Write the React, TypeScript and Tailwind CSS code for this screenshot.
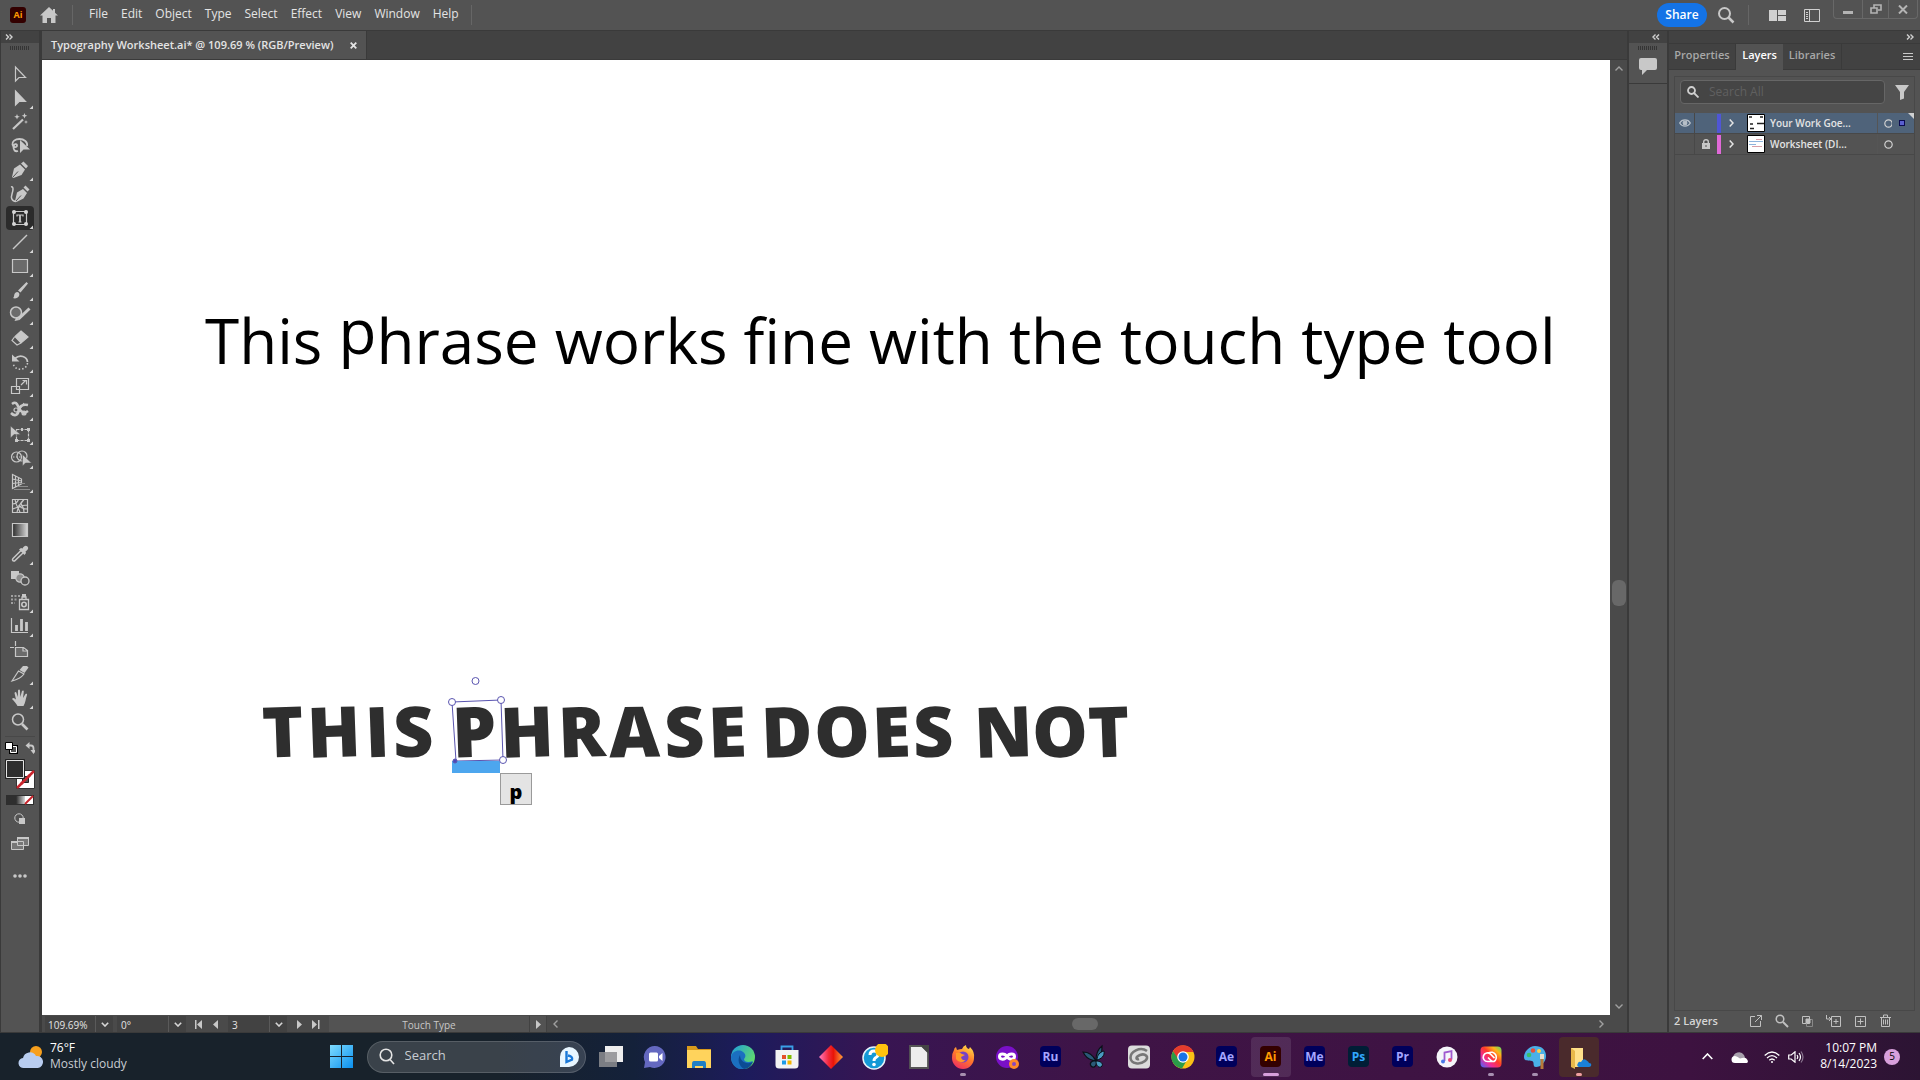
import React from 'react';

const menuItems = ['File', 'Edit', 'Object', 'Type', 'Select', 'Effect', 'View', 'Window', 'Help'];

// every tool is drawn on a 28x24 grid
const tools: { name: string; more?: boolean; active?: boolean; icon: React.ReactNode }[] = [
    { name: 'Selection Tool', icon: <path d="M9.500 5v14l3.500-3.500h6.500z" /> },
    { name: 'Direct Selection Tool', more: true, icon: <path fill="#c8c8c8" d="M9.500 5v14l3.500-3.500h6.500z" /> },
    {
        name: 'Magic Wand Tool',
        icon: (
            <>
                <path strokeWidth="2.200" d="M7 19 17 9.500" />
                <path fill="#c8c8c8" stroke="none" d="m11 4 .8 2 2 .8-2 .8-.8 2-.8-2-2-.8 2-.8zM18.500 3l.8 2 2 .8-2 .8-.8 2-.8-2-2-.8 2-.8zM20 10l.5 1.500 1.500.5-1.500.5-.5 1.500-.5-1.500-1.500-.5 1.500-.5z" />
            </>
        ),
    },
    {
        name: 'Lasso Tool',
        icon: (
            <>
                <path strokeWidth="1.800" d="M21 12c1-4-3-7-7.500-7S6 7.500 6.500 10.500 11 14 11 11.500 7.500 10 7.500 13s1.500 5 4.500 4" />
                <path fill="#c8c8c8" stroke="none" d="M14 6v13l3.500-3.500H24z" />
            </>
        ),
    },
    {
        name: 'Pen Tool',
        more: true,
        icon: (
            <>
                <path fill="#c8c8c8" stroke="none" d="m6 19 2-8.500 6-4 5 5-3.500 5.500L7.500 20zM15 5.500l2.500-2 4.500 4.500-2 2.500z" />
                <path stroke="#535353" strokeWidth="1" d="m7 19 5-5.500" />
            </>
        ),
    },
    {
        name: 'Curvature Tool',
        icon: (
            <>
                <path fill="#c8c8c8" stroke="none" d="m9 19 2-8.500 6-3.500 4 4-3.500 5.500L10.500 20zM17.500 5.500l2-2 4 4-2 2z" />
                <path strokeWidth="1.500" d="M5 5c3-1 2 4 1 7s-1 7 4 7.500" />
                <path stroke="#535353" strokeWidth="1" d="m10 19 5-5.500" />
            </>
        ),
    },
    {
        name: 'Touch Type Tool',
        more: true,
        active: true,
        icon: (
            <>
                <path d="M7.500 5.500h13v13h-13zM11 10.500v-1.500h6v1.500M12.500 16h3" />
                <path strokeWidth="1.800" d="M14 9v7" />
                <g fill="#d6d6d6" stroke="none">
                    <circle cx="8" cy="6" r="2" />
                    <circle cx="20" cy="6" r="2" />
                    <circle cx="8" cy="18" r="2" />
                    <circle cx="20" cy="18" r="2" />
                </g>
            </>
        ),
    },
    { name: 'Line Segment Tool', more: true, icon: <path strokeWidth="1.500" d="M7 19 21 5" /> },
    { name: 'Rectangle Tool', more: true, icon: <path fill="#6b6b6b" d="M6.500 5.500h15v13h-15z" /> },
    {
        name: 'Paintbrush Tool',
        more: true,
        icon: <path fill="#c8c8c8" stroke="none" d="M7 20c2-1 0-5 4-6 2 0 3 2 2 4-1 2-4 3-6 2zM12 12.500 20.500 4l1.500 1.500-7.500 9z" />,
    },
    {
        name: 'Shaper Tool',
        more: true,
        icon: (
            <>
                <circle cx="10" cy="10.500" r="5.500" fill="#6b6b6b" strokeWidth="1.500" />
                <path strokeWidth="3" d="m12.500 17 11-10.500" />
                <path fill="#c8c8c8" stroke="none" d="m8.500 19 2-4 3 3z" />
            </>
        ),
    },
    {
        name: 'Eraser Tool',
        more: true,
        icon: (
            <>
                <path fill="#c8c8c8" d="m15 5 7 6-7 6-6-6.500z" />
                <path d="M8.500 11 6 14.500l5 4.500 4-2" />
            </>
        ),
    },
    {
        name: 'Rotate Tool',
        more: true,
        icon: (
            <>
                <path strokeWidth="1.800" d="M9 8.500c5-4.500 12-2 12.500 3.500" />
                <path strokeWidth="1.600" strokeDasharray="1.500 2" d="M21.500 13c-1 8-13 8.500-14.500 0" />
                <path fill="#c8c8c8" stroke="none" d="M6 4.500v7h7.500z" />
            </>
        ),
    },
    {
        name: 'Scale Tool',
        more: true,
        icon: <path d="M5.500 12.500h8v7h-8zM10.500 15.500v-11h12v11zM15 11l4.500-4.500M16.500 6.500h4v4" />,
    },
    {
        name: 'Width Tool',
        more: true,
        icon: (
            <>
                <path strokeWidth="2.600" d="M6 6c4-3 5 0 7 4s5 6 9 3M5 15c4 4 7 2 8-3s4-6 9-5" />
                <path d="m9 18 9-13" />
                <circle cx="10" cy="12" r="2" fill="#535353" />
                <circle cx="18" cy="15" r="2" fill="#c8c8c8" />
            </>
        ),
    },
    {
        name: 'Free Transform Tool',
        more: true,
        icon: (
            <>
                <path strokeDasharray="3 1" d="M10.500 7.500h12v11h-12z" />
                <path fill="#c8c8c8" stroke="#535353" strokeWidth=".5" d="M4.500 4v12l3.500-3.500h6.500z" />
                <path fill="#c8c8c8" stroke="none" d="M21 6h3v3h-3zM21 17h3v3h-3zM9 17h3v3H9zM15 6h2v3h-2z" />
            </>
        ),
    },
    {
        name: 'Shape Builder Tool',
        more: true,
        icon: (
            <>
                <circle cx="10.500" cy="11" r="5" />
                <circle cx="16" cy="10" r="5" />
                <path strokeDasharray="1.500 1.500" d="M7 11h9" />
                <path fill="#c8c8c8" stroke="#535353" strokeWidth=".5" d="M16.500 8.500V20l3-3h6z" />
            </>
        ),
    },
    {
        name: 'Perspective Grid Tool',
        more: true,
        icon: (
            <>
                <path d="M6.500 4.500v14l9-4.500V9zM9.500 6v11M12.500 7.500v8M6.500 9l9 2M6.500 13.500l9-1" />
                <path stroke="#8c8c8c" d="M15 13.500h4M12 16.500h10M8 19.500h16" />
            </>
        ),
    },
    {
        name: 'Mesh Tool',
        icon: (
            <path d="M6.500 5.500h15v13h-15zM6.500 10c4 0 5-2 6-4.500M11 18.500c1-6 3-9 7-13M6.500 15c5-1 8-4 15-4M14 18.500c-1-4-4-6-5-13M21.500 15c-4 0-7-1-9-4M18 18.500c0-4-1-6-3-9" />
        ),
    },
    {
        name: 'Gradient Tool',
        icon: (
            <>
                <defs>
                    <linearGradient id="tool-grad">
                        <stop offset="0" stopColor="#2b2b2b" />
                        <stop offset="1" stopColor="#d6d6d6" />
                    </linearGradient>
                </defs>
                <path fill="url(#tool-grad)" d="M6.500 5.500h15v13h-15z" />
            </>
        ),
    },
    {
        name: 'Eyedropper Tool',
        more: true,
        icon: (
            <>
                <path d="m15 8.500-8 8c-1 1-.5 3 1.500 2.500l8.500-8" strokeWidth="1.500" />
                <path fill="#c8c8c8" stroke="none" d="M13 7.500 15 6l1.500.5C18 3.500 20 3 21.500 4.500S22 8 19.500 9.500l.5 1.500-1.500 2z" />
            </>
        ),
    },
    {
        name: 'Blend Tool',
        icon: (
            <>
                <path fill="#c8c8c8" stroke="none" d="M5 5h8v8H5z" />
                <circle cx="14" cy="12" r="4.200" fill="#8c8c8c" />
                <circle cx="19" cy="15" r="4" fill="#535353" strokeWidth="1.300" />
            </>
        ),
    },
    {
        name: 'Symbol Sprayer Tool',
        more: true,
        icon: (
            <>
                <path d="M13.500 9.500h9v10h-9zM16 9V7h4v2" strokeWidth="1.300" />
                <path fill="#c8c8c8" stroke="none" d="M16 4h4v3h-4z" />
                <circle cx="18" cy="14.500" r="2.200" strokeWidth="1.600" />
                <path stroke="#a0a0a0" strokeWidth="2" strokeDasharray="2 1.500" d="M5 6h9M5 9.500h6M5 13h4" />
            </>
        ),
    },
    {
        name: 'Column Graph Tool',
        more: true,
        icon: (
            <>
                <path d="M5.500 4v14.500H22" />
                <path strokeWidth="2.800" d="M10.500 11v6M15.500 5v12M20.500 8v9" />
            </>
        ),
    },
    {
        name: 'Artboard Tool',
        icon: <path fill="#6b6b6b" d="M9.500 9.500h8l4 3v6h-12zM17 10v3h4M4 9.500h4M9.500 3v5" />,
    },
    {
        name: 'Slice Tool',
        more: true,
        icon: (
            <>
                <path d="m6 19 6.500-10L18 12c-3 4-6 5-12 7z" />
                <path fill="#c8c8c8" stroke="none" d="m13.500 8 3.500-4h4l1.500 1.500L18.500 11z" />
            </>
        ),
    },
    {
        name: 'Hand Tool',
        more: true,
        icon: (
            <path
                fill="#c8c8c8"
                stroke="none"
                d="M11.500 20C10 17 8 15 6 13c1-1.500 2.500-1 4 .5L8.500 7c.5-1.300 1.700-1.200 2 0l1.300 4L12 4.500c.5-1.200 1.700-1.200 2 0l.3 6.500 1.700-6c.7-1 1.900-.6 1.800.5L17 12l2.500-4c1-.7 1.900 0 1.500 1-1.500 4-1.500 8-3.500 11z"
            />
        ),
    },
    {
        name: 'Zoom Tool',
        icon: (
            <>
                <circle cx="12" cy="9.500" r="5.500" strokeWidth="1.500" />
                <path strokeWidth="2.600" d="m16 14 5.500 5.500" />
            </>
        ),
    },
];

const Tool = ({ name, more, active, icon }: (typeof tools)[number]) => (
    <button type="button" title={name} aria-label={name} className={`h-6 w-7 rounded-sm ${active ? 'bg-[#2b2b2b]' : ''}`}>
        <svg width="28" height="24" viewBox="0 0 28 24" fill="none" stroke="#c8c8c8" strokeWidth="1.200">
            {icon}
            {more && <path fill="#d6d6d6" stroke="none" d="M27 19.500v3.500h-3.500z" />}
        </svg>
    </button>
);

const Grip = () => (
    <svg width="20" height="4" viewBox="0 0 20 4" className="mx-auto">
        <path stroke="#353535" strokeWidth="4" strokeDasharray="1 1" d="M0 2h20" />
    </svg>
);

const Chevrons = ({ flip }: { flip?: boolean }) => (
    <svg width="8" height="6" viewBox="0 0 8 6" fill="none" stroke="#d0d0d0" strokeWidth="1.400">
        {flip ? <path d="M3.500.5 1 3l2.500 2.500M7 .5 4.500 3 7 5.500" /> : <path d="M1 .5 3.500 3 1 5.500M4.500.5 7 3 4.500 5.500" />}
    </svg>
);

const Down = () => (
    <svg width="8" height="5" viewBox="0 0 8 5" fill="none" stroke="#d6d6d6" strokeWidth="1.600">
        <path d="m.8.8 3.200 3.200L7.200.8" />
    </svg>
);

const words = [
    { text: 'THIS', place: 'left-[220px] gap-1' },
    { text: 'PHRASE', place: 'left-[410px] gap-1' },
    { text: 'DOES', place: 'left-[719px] gap-0.5' },
    { text: 'NOT', place: 'left-[932px]' },
];
const tilt = ['-rotate-2', '-rotate-2', '-rotate-2', '-rotate-1'];

const Canvas = () => (
    <main className="relative min-w-0 flex-1 overflow-hidden bg-white">
        <p className="absolute left-[163px] top-[235px] whitespace-nowrap text-[62px] leading-[90px] text-black">
            This <span className="relative -top-[10px]">p</span>hrase works fine with the touch type tool
        </p>
        {words.map((w) => (
            <p key={w.text} className={`absolute top-[625px] flex text-[70px] font-extrabold leading-[90px] text-[#2e2e2e] ${w.place}`}>
                {w.text.split('').map((c, i) => (
                    <span key={i} className={tilt[i % 4]}>
                        {c}
                    </span>
                ))}
            </p>
        ))}
        <svg className="absolute left-[400px] top-[610px]" width="70" height="110" viewBox="0 0 70 110" fill="none" stroke="#5a55b0">
            <path d="m10 32 49-2 2 60-47 1z" />
            <path fill="#4da6ee" stroke="none" d="M10 91h48v12H10z" />
            <g fill="#fff">
                <circle cx="33.500" cy="11" r="3.500" />
                <circle cx="10" cy="32" r="3.500" />
                <circle cx="59" cy="30" r="3.500" />
                <circle cx="61" cy="90" r="3.500" />
            </g>
            <circle cx="13" cy="91" r="2" fill="#4a48b8" />
        </svg>
        <div className="absolute left-[458px] top-[713px] flex h-8 w-8 items-end justify-center border border-[#9a9a9a] bg-[#e4e4e4] text-xl font-extrabold leading-6 text-black">
            p
        </div>
    </main>
);

const StatusBar = () => (
    <footer className="flex h-[17px] items-end overflow-hidden bg-[#4a4a4a] pl-[3px] pr-[17px] text-[10px] text-[#e4e4e4]">
        <div className="flex h-4 w-[50px] items-center bg-[#424242] pl-[3px] pt-0.5">109.69%</div>
        <button type="button" aria-label="Zoom level" className="flex h-4 w-[18px] items-center justify-center border-l border-[#5a5a5a] bg-[#424242]"><Down /></button>
        <div className="ml-1 flex h-4 w-[51px] items-center bg-[#424242] pl-1 pt-0.5">0°</div>
        <button type="button" aria-label="Rotate view" className="flex h-4 w-[18px] items-center justify-center border-l border-[#5a5a5a] bg-[#424242]"><Down /></button>
        <div className="flex h-4 w-[42px] items-center justify-center">
            <svg width="26" height="9" viewBox="0 0 26 9" fill="#c8c8c8"><path d="M1 0h1.500v9H1zM8 0v9L3 4.500zM24 0v9l-5-4.500z" /></svg>
        </div>
        <div className="flex h-4 w-[41px] items-center bg-[#424242] pl-1 pt-0.5">3</div>
        <button type="button" aria-label="Artboard" className="flex h-4 w-[18px] items-center justify-center border-l border-[#5a5a5a] bg-[#424242]"><Down /></button>
        <div className="flex h-4 w-[42px] items-center justify-center">
            <svg width="26" height="9" viewBox="0 0 26 9" fill="#c8c8c8"><path d="M2 0v9l5-4.500zM17 0v9l5-4.500zM23 0h1.500v9H23z" /></svg>
        </div>
        <div className="flex h-4 w-[200px] items-center justify-center bg-[#535353] pt-0.5 text-[#c8c8c8]">Touch Type</div>
        <div className="flex h-4 w-[18px] items-center justify-center border-x border-[#424242] bg-[#535353]">
            <svg width="5" height="9" viewBox="0 0 5 9" fill="#c8c8c8"><path d="M0 0v9l5-4.500z" /></svg>
        </div>
        <div className="flex h-4 flex-1 items-center justify-between px-1.5">
            <svg width="5" height="8" viewBox="0 0 5 8" fill="none" stroke="#a0a0a0" strokeWidth="1.400"><path d="M4.500.5 1 4l3.500 3.500" /></svg>
            <span className="ml-3 h-3 w-[26px] rounded-full bg-[#686868]" />
            <svg width="5" height="8" viewBox="0 0 5 8" fill="none" stroke="#a0a0a0" strokeWidth="1.400"><path d="M.5.5 4 4 .5 7.500" /></svg>
        </div>
    </footer>
);

const ScrollV = () => (
    <div className="flex w-[17px] flex-col items-center justify-between bg-[#4a4a4a] pb-1.5 pt-1.5">
        <svg width="8" height="5" viewBox="0 0 8 5" fill="none" stroke="#a0a0a0" strokeWidth="1.400"><path d="M.5 4.500 4 1l3.500 3.500" /></svg>
        <span className="mt-[110px] h-[26px] w-3.5 rounded-md bg-[#686868]" />
        <svg width="8" height="5" viewBox="0 0 8 5" fill="none" stroke="#a0a0a0" strokeWidth="1.400"><path d="M.5.5 4 4 7.500.5" /></svg>
    </div>
);

const TopBar = () => (
    <header className="flex h-[30px] items-center bg-[#535353] text-xs text-[#e4e4e4]">
        <span className="ml-2.5 flex h-4 w-4 items-center justify-center rounded-[3px] bg-[#330000] text-[9px] font-bold text-[#ff9a00]">Ai</span>
        <svg className="ml-3.5" width="18" height="16" viewBox="0 0 18 16" fill="#c8c8c8"><path d="M9 0 0 8.500h2.500V16H7v-5h4v5h4.500V8.500H18L15 5.700V2h-2v1.800z" /></svg>
        <span className="ml-3.5 h-5 w-px bg-[#666]" />
        <nav className="ml-4 flex gap-[13px] pb-0.5">
            {menuItems.map((m) => (
                <button key={m} type="button">{m}</button>
            ))}
        </nav>
        <span className="ml-3 h-5 w-px bg-[#666]" />
        <div className="ml-auto flex h-full items-center">
            <button type="button" className="h-6 w-[50px] rounded-full bg-[#1473e6] font-semibold text-white">Share</button>
            <svg className="ml-2.5" width="18" height="18" viewBox="0 0 18 18" fill="none" stroke="#c8c8c8" strokeWidth="2"><circle cx="7.500" cy="7.500" r="5.500" /><path strokeWidth="2.500" d="m11.500 11.500 5 5" /></svg>
            <span className="ml-[13px] h-5 w-px bg-[#666]" />
            <svg className="ml-5" width="17" height="11" viewBox="0 0 17 11" fill="#d0d0d0"><path d="M0 0h8v11H0zM9 0h8v5H9zM9 6h8v5H9z" /></svg>
            <svg className="ml-[18px]" width="16" height="13" viewBox="0 0 16 13" fill="none" stroke="#d0d0d0"><path d="M.5.500h15v12H.5zM5.500.5v12" /><path strokeDasharray="1 1" strokeWidth="2" d="M3 3v7" /></svg>
            <div className="ml-[13px] mr-0.5 flex h-[19px] self-start rounded-b-sm border border-t-0 border-[#686868]">
                <button type="button" aria-label="Minimize" className="flex w-7 items-center justify-center"><svg width="10" height="3" fill="#b4b4b4" className="mt-1.5"><path d="M0 0h10v3H0z" /></svg></button>
                <button type="button" aria-label="Restore" className="flex w-[27px] items-center justify-center border-x border-[#686868]"><svg width="12" height="10" viewBox="0 0 12 10" fill="none" stroke="#b4b4b4" strokeWidth="1.600"><path d="M4 4V1h7v5H8M1 4h6v5H1z" /></svg></button>
                <button type="button" aria-label="Close" className="flex w-7 items-center justify-center"><svg width="10" height="9" viewBox="0 0 10 9" stroke="#b4b4b4" strokeWidth="2"><path d="m1 .5 8 8M9 .5l-8 8" /></svg></button>
            </div>
        </div>
    </header>
);

const Toolbar = () => (
    <aside className="flex w-10 flex-col border-l border-r border-[#3a3a3a] bg-[#535353]">
        <div className="flex h-3 items-center bg-[#424242] pl-1"><Chevrons /></div>
        <div className="py-[3px]"><Grip /></div>
        <div className="mt-[9px] flex flex-col items-center">
            {tools.map((t) => (
                <Tool key={t.name} {...t} />
            ))}
        </div>
        <div className="mx-1 mt-0.5 border-t border-[#484848]" />
        <svg className="mt-[5px] self-center" width="30" height="65" viewBox="5 742 30 65" fill="none">
            <path stroke="#000" strokeWidth="2" d="M10 746h7v7h-7z" />
            <path stroke="#fff" d="M10.500 746.500h6v6h-6z" />
            <path fill="#fff" stroke="#000" d="M5.500 742.500h7v7h-7z" />
            <path stroke="#c8c8c8" strokeWidth="1.800" d="M28 745.500h3q2.500 0 2.500 3v3" />
            <path fill="#c8c8c8" d="m25.500 745.500 4-3.500v7zM30.500 750h6l-3 4z" />
            <path fill="#fff" stroke="#333" d="M16.500 770.500h18v18h-18z" />
            <path stroke="#c9252d" strokeWidth="2.500" d="m17 788 17-17" />
            <path fill="#535353" stroke="#222" d="M22.500 776.500h6v6h-6z" />
            <path stroke="#c9252d" strokeWidth="2.500" d="m21 784 9-9" />
            <path fill="#2e2e2e" stroke="#222" d="M5.500 759.500h19v19h-19z" />
            <path stroke="#e4e4e4" d="M6.500 760.500h17v17h-17z" />
            <path fill="#2e2e2e" d="M6 795h28v10H6z" />
            <path fill="url(#tool-grad)" d="M16 796h9v8h-9z" />
            <path fill="#fff" d="M25 796h8v8h-8z" />
            <path stroke="#c9252d" strokeWidth="2" d="m25 804 8-8" />
        </svg>
        <svg className="mt-[5px] self-center" width="28" height="70" viewBox="6 812 28 70" fill="none" stroke="#c8c8c8">
            <circle cx="19" cy="818" r="4.200" />
            <path fill="#c8c8c8" stroke="none" d="M19 818h6v6h-6z" />
            <path fill="#777" d="M11.500 841.500h12v8h-12zM17.500 837.500h11v8h-11z" />
            <path stroke="none" fill="#c8c8c8" d="M11 841h7v2h-7zM17 837h12v2H17z" />
            <g fill="#c8c8c8" stroke="none"><circle cx="15" cy="876" r="1.800" /><circle cx="20" cy="876" r="1.800" /><circle cx="25" cy="876" r="1.800" /></g>
        </svg>
    </aside>
);

const layers = [
    { name: 'Your Work Goe...', bar: 'bg-[#4f56d6]', selected: true },
    { name: 'Worksheet (DI...', bar: 'bg-[#e069d8]', selected: false },
];

const LayersPanel = () => (
    <aside className="flex w-[251px] flex-col bg-[#535353] text-[11px] text-[#d6d6d6]">
        <div className="flex h-3 items-center justify-end bg-[#424242] pr-1.5"><Chevrons /></div>
        <div className="flex h-[27px] border-y border-[#3a3a3a] bg-[#424242] font-semibold text-[#a8a8a8]">
            <button type="button" className="w-[67px] border-r border-[#3a3a3a] pb-0.5">Properties</button>
            <button type="button" className="-mb-px w-[47px] bg-[#535353] pb-[3px] text-white">Layers</button>
            <button type="button" className="w-[59px] border-r border-[#3a3a3a] pb-0.5">Libraries</button>
            <svg className="ml-auto mr-[7px] mt-[9px]" width="10" height="8" stroke="#c8c8c8"><path d="M0 .5h10M0 3.500h10M0 6.500h10" /></svg>
        </div>
        <div className="mx-[5px] mt-1.5 flex flex-1 flex-col border border-[#484848]">
            <div className="flex h-9 items-center pb-1.5">
                <label className="ml-[5px] flex h-6 w-[205px] items-center rounded-sm border border-[#666] bg-[#454545] pl-1.5">
                    <svg width="12" height="12" viewBox="0 0 12 12" fill="none" stroke="#d0d0d0" strokeWidth="1.800"><circle cx="4.500" cy="4.500" r="3.500" /><path d="m7 7 4.500 4.500" /></svg>
                    <input aria-label="Search All" placeholder="Search All" className="ml-2.5 w-32 bg-transparent text-xs outline-none placeholder:text-[#606060]" />
                </label>
                <svg className="ml-2.5" width="14" height="15" fill="#c8c8c8"><path d="M0 0h14L9 7v6.500L5 15V7z" /></svg>
            </div>
            {layers.map((l) => (
                <div key={l.name} className={`flex h-[21px] items-center border-b border-[#484848] text-[10px] font-semibold text-[#e4e4e4] ${l.selected ? 'bg-[#4f637a]' : ''}`}>
                    <span className="flex h-full w-5 shrink-0 items-center justify-center border-r border-[#484848]">
                        {l.selected && (
                            <svg width="12" height="8" viewBox="0 0 12 8" fill="none" stroke="#b8c0c8" strokeWidth="1.300"><path d="M.7 4C3-.2 9-.2 11.300 4 9 8.200 3 8.200.7 4z" /><circle cx="6" cy="4" r="1.800" fill="#b8c0c8" /></svg>
                        )}
                    </span>
                    <span className="flex h-full w-[22px] shrink-0 items-center justify-center">
                        {!l.selected && (
                            <svg width="8" height="10" viewBox="0 0 8 10" fill="#c8c8c8"><path d="M0 4h8v6H0z" /><path fill="none" stroke="#c8c8c8" strokeWidth="1.400" d="M1.700 4.500V2.800Q1.700.7 4 .7t2.300 2.100v1.700" /><path fill="#535353" d="M3.500 6h1v2h-1z" /></svg>
                        )}
                    </span>
                    <span className={`h-[19px] w-1 shrink-0 ${l.bar}`} />
                    <svg className="ml-2 shrink-0" width="5" height="8" viewBox="0 0 5 8" fill="none" stroke="#e4e4e4" strokeWidth="1.500"><path d="M.7.5 4 4 .7 7.500" /></svg>
                    <svg className="ml-[13px] shrink-0" width="18" height="18" viewBox="0 0 18 18">
                        <path fill="#fff" stroke="#000" d="M.5.5h17v17H.5z" />
                        {l.selected ? (
                            <path stroke="#222" d="M2 3h3M13 3h3M10 9.500h7M3 10h3M3 14.500h4" strokeWidth="1.600" />
                        ) : (
                            <>
                                <path stroke="#8fb4dc" d="M2 6.500h14M2 9.500h7" />
                                <path stroke="#d9a0a8" d="M9 4.500h6M5 11.500h10" />
                            </>
                        )}
                    </svg>
                    <span className="ml-[5px] min-w-0 flex-1 whitespace-nowrap">{l.name}</span>
                    <span className="flex h-full w-[37px] shrink-0 items-center gap-[7px] border-l border-[#555] pl-1.5">
                        <svg width="9" height="9" fill="none" stroke="#d0d0d0" strokeWidth="1.200"><circle cx="4.500" cy="4.500" r="3.700" /></svg>
                        {l.selected && <span className="h-1.5 w-1.5 shrink-0 border border-[#0b0b50] bg-[#5a5fd0]" />}
                        {l.selected && <svg width="6" height="6" className="-ml-1 shrink-0 self-start" fill="#d0d0d0"><path d="M0 0h6v6z" /></svg>}
                    </span>
                </div>
            ))}
        </div>
        <div className="flex h-[21px] items-center pb-px pl-[5px] font-semibold">
            2 Layers
            <svg className="ml-auto mr-[27px]" width="144" height="14" viewBox="1749 1014 144 14" fill="none" stroke="#c0c0c0">
                <path d="M1755 1016.500h-4.500v10h10V1021M1755 1022l6.500-6.500M1757 1015.500h4.500v4.500" />
                <circle cx="1780" cy="1019" r="3.800" strokeWidth="1.500" /><path strokeWidth="2" d="m1783 1022 5 5" />
                <path d="M1802.500 1016.500h7v7h-7z" /><path stroke="#888" d="M1806.500 1019.500h6v7h-6z" /><path fill="#c0c0c0" d="M1806 1019h4v4h-4z" />
                <path d="M1831.500 1016.500h9v10h-9zM1836 1019v5M1833.500 1021.500h5M1826.500 1015v4h4M1829 1017l2 2-2 2" />
                <path d="M1855.500 1016.500h10v10h-10zM1860.500 1018.500v6M1857.500 1021.500h6" />
                <path d="M1880 1017.500h11M1883.500 1017v-2h4v2M1881.500 1017.500v9h8v-9M1883.500 1019.500v5M1885.500 1019.500v5M1887.500 1019.500v5" />
            </svg>
        </div>
    </aside>
);

const adobe = (label: string, cls: string) => (
    <span className={`flex h-[21px] w-[21px] items-center justify-center rounded ${cls} text-xs font-bold leading-none`}>{label}</span>
);

const Ico = ({ children }: { children: React.ReactNode }) => (
    <svg width="26" height="26" viewBox="0 0 26 26" fill="none">{children}</svg>
);

const apps: { name: string; icon: React.ReactNode; dot?: string; cell?: string }[] = [
    { name: 'Task View', icon: <Ico><path fill="#eee" d="M7 2h18v16H7z" /><path fill="#8d8d90" fillOpacity=".85" d="M1 8h18v15H1z" /></Ico> },
    { name: 'Chat', icon: <Ico><path fill="#6468c0" d="M13 2a11 11 0 1 1-5 21l-6 1 1-6A11 11 0 0 1 13 2z" /><rect x="7" y="8.500" width="9" height="9" rx="1.500" fill="#fff" /><path fill="#fff" d="m17 12 3.500-3v8L17 14z" /></Ico> },
    { name: 'File Explorer', icon: <Ico><path fill="#d99a1c" d="M1 2h9l2 3h13v8H1z" /><path fill="#ffd35c" d="M1 6h24v18H1z" /><path fill="#1f7fc4" d="M6 24v-4q0-3 2-3h10q2 0 2 3v4h-3v-2H9v2z" /></Ico> },
    {
        name: 'Edge',
        icon: (
            <Ico>
                <defs><linearGradient id="edge" x1="0" x2="1" y1="0" y2=".6"><stop stopColor="#1d9be0" /><stop offset="1" stopColor="#62dc6a" /></linearGradient></defs>
                <circle cx="13" cy="13" r="12" fill="url(#edge)" />
                <path fill="#1b6fc0" d="M1 13c1-6 8-8 12-5 3 2 3 5 1 7 0 3 4 4 9 2-3 7-9 8-12 8C5 25 1 19 1 13z" />
                <path fill="#0c4c94" d="M10 11c-3 5-1 11 4 14 4 0 7-3 9-7-6 3-13 0-13-7z" />
            </Ico>
        ),
    },
    { name: 'Store', icon: <Ico><path stroke="#3aa0e8" strokeWidth="1.800" d="M7.500 7V2.500h11V7" /><path fill="#f3f3f3" d="M1.500 6h23v15q0 3.500-3.500 3.500H5q-3.500 0-3.500-3.500z" /><path fill="#e5502a" d="M8 11h4v4H8z" /><path fill="#7fba00" d="M13.500 11h4v4h-4z" /><path fill="#1e9be8" d="M8 16.500h4v4H8z" /><path fill="#f5b400" d="M13.500 16.500h4v4h-4z" /></Ico> },
    {
        name: 'Express',
        icon: (
            <Ico>
                <defs><linearGradient id="gem" x1="0" x2="1"><stop stopColor="#ff7ac0" /><stop offset=".4" stopColor="#f0283a" /><stop offset=".6" stopColor="#e81408" /><stop offset="1" stopColor="#ffa03a" /></linearGradient></defs>
                <path fill="url(#gem)" d="M13 1 25 13 13 25 1 13z" />
            </Ico>
        ),
    },
    { name: 'Get Help', icon: <Ico><circle cx="12" cy="14" r="11" fill="#1499d6" stroke="#e8f4fa" strokeWidth="1.500" /><path stroke="#fff" strokeWidth="3" d="M8 11q0-4 4-4t4 3.500q0 2-2 3t-2 3.500" /><circle cx="12" cy="20.500" r="1.800" fill="#fff" /><circle cx="20" cy="6" r="7" fill="#ffc20e" /></Ico> },
    { name: 'LibreOffice', icon: <Ico><path fill="#ededed" stroke="#555" strokeWidth="1.800" d="M4 2h12l6 6v16H4z" /><path fill="#444" d="M14 1h9v9z" /></Ico> },
    {
        name: 'Firefox',
        dot: 'w-1.5 bg-[#a78fb0]',
        icon: (
            <Ico>
                <defs><linearGradient id="ff" x1=".8" x2=".3" y1="0" y2="1"><stop stopColor="#ffe14a" /><stop offset=".5" stopColor="#ff7a2a" /><stop offset="1" stopColor="#ee2f62" /></linearGradient></defs>
                <path fill="url(#ff)" d="M4 6q0-2 2-3l1 3q3-1 5-1 1-3 4-4 0 3 3 4l1-2q5 5 4 11a11 11 0 0 1-22 0Q2 9 4 6z" />
                <circle cx="13" cy="13" r="5.500" fill="#7542c8" /><path fill="#ff9a2a" d="M6 9q4-1 6 1l3 1-4 2q1 4 5 3-6 5-10-1z" />
            </Ico>
        ),
    },
    { name: 'Private Browsing', icon: <Ico><circle cx="13" cy="13" r="11" fill="#7a10c8" /><path stroke="#fff" strokeWidth="3" d="M13 12.500c-2-3.500-7.500-3.500-7.500 0s5.500 3.500 7.500 0 7.500-3.500 7.500 0-5.500 3.500-7.500 0z" /><circle cx="20" cy="20" r="5" fill="#ff8a2a" /><circle cx="20" cy="20" r="2" fill="#8848c0" /></Ico> },
    { name: 'Rush', icon: adobe('Ru', 'bg-[#00005b] text-[#a5a5ff]') },
    {
        name: 'Butterfly',
        icon: (
            <Ico>
                <path fill="#2a5a78" stroke="#0a1018" strokeWidth="1.200" d="M14 17C11 11 7 8 1 8c2 4 4 7 9 8zM14 17c-4-1-7 2-5 5 2 2 5 2 6-5zM14 16c0-7 2-11 6-14 0 5 0 9-5 14z" />
                <path fill="#4a9ac0" stroke="#0a1018" d="M15 16c4-1 8-4 7-9-4 1-7 4-7 9zM14 17c0 4 2 7 5 6 3-2 1-6-5-6z" />
            </Ico>
        ),
    },
    { name: 'Clip', icon: <Ico><rect x="2" y="1.500" width="22" height="23" rx="4" fill="#dcdcdc" /><path stroke="#777" strokeWidth="2.600" d="M21 7C14 2 4 8 4.500 14S14 21 19 17s0-8-5-6-4 5-1 4" /></Ico> },
    {
        name: 'Chrome',
        icon: <Ico><circle cx="13" cy="13" r="11.500" fill="#fbc116" /><path fill="#e33b2e" d="M3 7.300A11.500 11.500 0 0 1 23.500 8H13l-5 8z" /><path fill="#2a9d49" d="M3 7.300A11.500 11.500 0 0 0 12 24.500L17 16l-8 0z" /><circle cx="13" cy="13" r="5.800" fill="#fff" /><circle cx="13" cy="13" r="4.500" fill="#1a73e8" /></Ico>,
    },
    { name: 'After Effects', icon: adobe('Ae', 'bg-[#00005b] text-[#a5a5ff]') },
    { name: 'Illustrator', icon: adobe('Ai', 'bg-[#330000] text-[#ff9a00]'), dot: 'w-4 bg-[#d8a0dc]', cell: 'bg-white/10' },
    { name: 'Media Encoder', icon: adobe('Me', 'bg-[#00005b] text-[#a5a5ff]') },
    { name: 'Photoshop', icon: adobe('Ps', 'bg-[#001e36] text-[#31a8ff]') },
    { name: 'Premiere Pro', icon: adobe('Pr', 'bg-[#00005b] text-[#a5a5ff]') },
    { name: 'iTunes', icon: <Ico><circle cx="13" cy="13" r="10.500" fill="#f5f5fa" /><path stroke="#a05ad0" strokeWidth="1.800" d="M10.500 17V8.500l7-1.500v8.500" /><circle cx="9" cy="17.500" r="2" fill="#4a7ae8" /><circle cx="16" cy="16" r="2" fill="#e84a7a" /></Ico> },
    {
        name: 'Creative Cloud',
        dot: 'w-1.5 bg-[#a78fb0]',
        icon: (
            <Ico>
                <defs><linearGradient id="cc" x1="0" x2="1" y1="1" y2="0"><stop stopColor="#3a6aff" /><stop offset=".3" stopColor="#f02a9a" /><stop offset=".55" stopColor="#ff3a2a" /><stop offset=".78" stopColor="#ffb41a" /><stop offset="1" stopColor="#4adc6a" /></linearGradient></defs>
                <rect x="2.500" y="2.500" width="21" height="21" rx="4" fill="url(#cc)" />
                <path stroke="#fff" strokeWidth="1.600" d="M16 17.500H9.500a4.300 4.300 0 1 1 3-7.400l4 4M10.500 9a5 5 0 1 1 5.500 8.500c-1.500 0-2.500-.5-3.500-1.500L10 13.500" />
            </Ico>
        ),
    },
    { name: 'Paint', dot: 'w-1.5 bg-[#a78fb0]', icon: <Ico><path fill="#4ab0e8" d="M13 2c7 0 11 4 11 10s-5 11-10 11c-4 0-1-5-4-6s-8 1-8-4 5-11 11-11z" /><circle cx="7" cy="11" r="2.300" fill="#3ac06a" /><circle cx="11" cy="6.500" r="2.300" fill="#e8503a" /><circle cx="17" cy="7" r="2" fill="#ffd24a" /><path fill="#b87a3a" d="M18.500 14h3v11h-3z" /><path fill="#e8e0d0" d="M18 10h4v5h-4z" /></Ico> },
    { name: 'OneDrive', dot: 'w-1.5 bg-[#f0a0a0]', cell: 'bg-[#4a2a2c]', icon: <Ico><path fill="#ffe08a" d="M5 4h12v19H5z" /><path fill="#e8b84a" d="m5 4 4 3v18l-4-2z" /><path fill="#1a80d8" d="M13 23q-3-1-1-4 1-2 3-1 2-4 5-2t3 3q3 0 2 3-1 1-2 1z" /></Ico> },
];

const Taskbar = () => (
    <footer className="grid h-12 grid-cols-[1fr_auto_1fr] items-center border-t border-[#3a3a3a] bg-[linear-gradient(90deg,#18222b_0%,#18222b_26%,#14213a_33%,#1d1b5c_39%,#381552_46%,#3f1446_58%,#3d1240_88%,#2c1433_100%)] text-xs text-white">
        <div className="flex items-center gap-1.5 pl-[18px]">
            <svg width="26" height="24" viewBox="0 0 26 24"><circle cx="18" cy="7" r="6" fill="#f7a01e" /><path fill="#b8cdf0" d="M6 23a5 5 0 0 1-1-10 7 7 0 0 1 13-2 6 6 0 0 1 2 12z" /></svg>
            <div className="pb-0.5 leading-4"><p>76°F</p><p className="text-[#c8ccd2]">Mostly cloudy</p></div>
        </div>
        <div className="flex items-center">
            <button type="button" aria-label="Start" className="flex w-11 justify-center">
                <svg width="23" height="23"><defs><linearGradient id="win" x1="0" x2="1" y1="0" y2="1"><stop stopColor="#7fdcff" /><stop offset="1" stopColor="#0a90ee" /></linearGradient></defs><path fill="url(#win)" d="M0 0h11v11H0zM12 0h11v11H12zM0 12h11v11H0zM12 12h11v11H12z" /></svg>
            </button>
            <label className="mx-[3px] flex h-8 w-[219px] items-center rounded-full border border-white/15 bg-white/15 pl-[11px] pr-1.5">
                <svg width="16" height="17" viewBox="0 0 16 17" fill="none" stroke="#e4e4e4" strokeWidth="1.600"><circle cx="7" cy="7" r="5.800" /><path d="m11 11.500 4 4.500" /></svg>
                <input aria-label="Search" placeholder="Search" className="ml-2.5 min-w-0 flex-1 bg-transparent pb-0.5 text-[13px] outline-none placeholder:text-[#c8ccd2]" />
                <svg width="20" height="20" viewBox="0 0 20 20"><path fill="#e8f6ff" d="M10 0a10 10 0 1 1 0 20H1V10A9.500 9.500 0 0 1 10 0z" /><path fill="none" stroke="#1a78d8" strokeWidth="2.400" d="M7.500 4v11l5.500-2.500q1-3-4-4" /></svg>
            </label>
            {apps.map((a) => (
                <button key={a.name} type="button" aria-label={a.name} className={`relative mx-0.5 flex h-10 w-10 items-center justify-center rounded ${a.cell ?? ''}`}>
                    {a.icon}
                    {a.dot && <span className={`absolute bottom-px h-[3px] rounded-full ${a.dot}`} />}
                </button>
            ))}
        </div>
        <div className="flex items-center justify-end pr-5">
            <svg width="11" height="7" viewBox="0 0 11 7" fill="none" stroke="#fff" strokeWidth="1.600"><path d="M.7 6 5.500 1l4.800 5" /></svg>
            <svg className="ml-[18px]" width="17" height="12" viewBox="0 0 17 12"><path fill="#a8a0ac" d="M2 7a6 6 0 0 1 11-3l2 5z" /><path fill="#fff" d="M4 12a3.500 3.500 0 0 1 0-7q2 0 5 2.500 6-2 7.500 1.500T14 12z" /></svg>
            <svg className="ml-4" width="16" height="12" viewBox="0 0 16 12" fill="none" stroke="#fff" strokeWidth="1.300"><path d="M.7 4.500q7.300-7 14.600 0M3 7q5-4.800 10 0M5.300 9.300q2.700-2.600 5.400 0" /><circle cx="8" cy="11" r="1" fill="#fff" stroke="none" /></svg>
            <svg className="ml-2" width="16" height="12" viewBox="0 0 16 12" fill="none" stroke="#fff" strokeWidth="1.200"><path d="M.7 4h2.500L7 .8v10.400L3.200 8H.7zM9 4q1.500 2 0 4M11 2q3 4 0 8" /><path stroke="#8a7890" d="M13 .5q4 5.500 0 11" /></svg>
            <div className="ml-4 pb-0.5 text-right leading-4"><p>10:07 PM</p><p>8/14/2023</p></div>
            <span className="ml-[7px] flex h-4 w-4 items-center justify-center rounded-full bg-[#d8a0dc] text-[10px] text-black">5</span>
        </div>
    </footer>
);

export default function App() {
    return (
        <div className="flex min-h-screen flex-col bg-[#3a3a3a] font-['Open_Sans',sans-serif]">
            <TopBar />
            <div className="mt-px flex flex-1">
                <Toolbar />
                <div className="ml-0.5 flex min-w-0 flex-1 flex-col">
                    <div className="flex h-[29px] border-b border-[#3a3a3a] bg-[#424242]">
                        <div className="flex items-center gap-[17px] border-r border-[#3a3a3a] bg-[#535353] px-[9px] text-[11px] font-semibold text-[#e4e4e4]">
                            Typography Worksheet.ai* @ 109.69 % (RGB/Preview)
                            <button type="button" aria-label="Close tab"><svg width="7" height="7" viewBox="0 0 7 7" stroke="#e4e4e4" strokeWidth="1.800"><path d="m.7.700 5.600 5.600M6.300.7.700 6.300" /></svg></button>
                        </div>
                    </div>
                    <div className="flex flex-1">
                        <Canvas />
                        <ScrollV />
                    </div>
                    <StatusBar />
                </div>
                <aside className="mx-0.5 w-[38px] bg-[#535353]">
                    <div className="flex h-3 items-center justify-end bg-[#424242] pr-[7px]"><Chevrons flip /></div>
                    <div className="border-b border-[#3a3a3a] pb-2 pt-[3px]">
                        <Grip />
                        <svg className="mx-auto mt-2" width="18" height="17" fill="#c8c8c8"><path d="M2 0h14q2 0 2 2v8q0 2-2 2H8l-5 5v-5H2q-2 0-2-2V2q0-2 2-2z" /></svg>
                    </div>
                </aside>
                <LayersPanel />
            </div>
            <Taskbar />
        </div>
    );
}
